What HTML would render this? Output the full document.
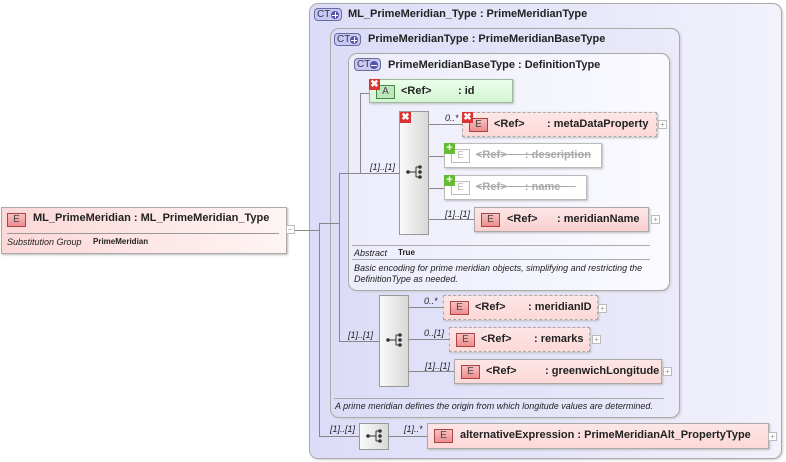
<!DOCTYPE html><html><head><meta charset="utf-8"><style>
*{margin:0;padding:0;box-sizing:border-box}
body{width:786px;height:462px;background:#fff;font-family:"Liberation Sans",sans-serif;position:relative;overflow:hidden;font-size:11px;color:#222}
.a{position:absolute}
.ct{position:absolute;border:1px solid #aaa;border-radius:9px;box-shadow:1px 1px 2px #ccc}
.badge{position:absolute;height:13px;border:1px solid #6a6aa0;border-radius:4px;background:#c8c8f0;font-size:10px;line-height:11px;padding-left:2px;color:#335}
.badge i{position:absolute;right:2px;top:2px;width:8px;height:8px;border-radius:50%;background:#55a;}
.badge i:before{content:"";position:absolute;left:1px;top:3.5px;width:6px;height:1px;background:#fff}
.badge i.pls:after{content:"";position:absolute;left:3.5px;top:1px;width:1px;height:6px;background:#fff}
.t{position:absolute;font-weight:bold;font-size:11px;white-space:nowrap}
.el{position:absolute;border:1px solid #aaa;background:linear-gradient(#fde6e6,#fdd8d8);box-shadow:1px 1px 2px #bbb}
.el.d{border:1px dashed #aaa}
.el.g{background:#fff;border:1px solid #bbb;color:#aaa}
.E{position:absolute;left:6px;top:5px;width:19px;height:14px;border:1px solid #a44;background:linear-gradient(#f9c0c0,#ee8e8e);font-size:10px;text-align:center;line-height:12px;color:#444}
.g .E{border-color:#bbb;background:#fff;color:#bbb}
.el span{position:absolute;top:5px;font-weight:bold;white-space:nowrap}
.seq{position:absolute;border:1px solid #999;background:linear-gradient(90deg,#fafafa,#d8d8d8);}
.pl{position:absolute;width:9px;height:9px;border:1px solid #bbb;background:#fff;font-size:8px;line-height:7px;text-align:center;color:#999}
.h{position:absolute;height:1px;background:#888}
.v{position:absolute;width:1px;background:#888}
.m{position:absolute;font-style:italic;font-size:9px;white-space:nowrap}
.x{position:absolute;width:11px;height:11px;background:#d33;color:#fff;font-size:10px;line-height:11px;text-align:center;font-weight:bold}
.p{position:absolute;width:11px;height:11px;background:#6b3;color:#fff;font-size:11px;line-height:10px;text-align:center;font-weight:bold}
svg.ic{position:absolute}
</style></head><body>
<svg width="0" height="0" style="position:absolute"><defs><g id="sq" fill="#333" stroke="#333"><circle cx="2" cy="7" r="1.8" stroke="none"/><line x1="2" y1="7" x2="10" y2="7"/><line x1="10" y1="2" x2="10" y2="12"/><line x1="10" y1="2" x2="14" y2="2"/><line x1="10" y1="12" x2="14" y2="12"/><circle cx="14" cy="2" r="1.8" stroke="none"/><circle cx="14" cy="7" r="1.8" stroke="none"/><circle cx="14" cy="12" r="1.8" stroke="none"/></g></defs></svg>
<div class="ct" style="left:309px;top:3px;width:473px;height:456px;background:linear-gradient(90deg,#dcdcf8,#e8e8fa 60%,#f2f2fc)"></div>
<div class="badge" style="left:314px;top:8px;width:28px">CT<i class="pls"></i></div>
<div class="t" style="left:348px;top:8px">ML_PrimeMeridian_Type : PrimeMeridianType</div>
<div class="ct" style="left:330px;top:28px;width:350px;height:390px;background:linear-gradient(90deg,#dcdcf8,#eaeafa)"></div>
<div class="badge" style="left:334px;top:33px;width:27px">CT<i class="pls"></i></div>
<div class="t" style="left:368px;top:33px">PrimeMeridianType : PrimeMeridianBaseType</div>
<div class="ct" style="left:348px;top:53px;width:322px;height:238px;background:linear-gradient(90deg,#ececfb,#fafaff)"></div>
<div class="badge" style="left:354px;top:58px;width:27px">CT<i></i></div>
<div class="t" style="left:388px;top:59px">PrimeMeridianBaseType : DefinitionType</div>
<div class="el" style="left:369px;top:79px;width:144px;height:24px;background:linear-gradient(#eaffea,#d4f4d4);border-color:#9b9"><div class="E" style="border-color:#484;background:#bde8bd;left:6px">A</div><span style="left:31px">&lt;Ref&gt;</span><span style="left:88px">: id</span></div>
<div class="x" style="left:369px;top:79px">✖</div>
<div class="seq" style="left:399px;top:111px;width:30px;height:124px"></div>
<div class="x" style="left:400px;top:112px">✖</div>
<svg class="ic" style="left:406px;top:165px" width="17" height="15"><use href="#sq"/></svg>
<div class="el d" style="left:462px;top:112px;width:195px;height:25px"><div class="E">E</div><span style="left:31px">&lt;Ref&gt;</span><span style="left:84px">: metaDataProperty</span></div>
<div class="x" style="left:462px;top:112px">✖</div><div class="pl" style="left:658px;top:120px">+</div>
<div class="el g" style="left:444px;top:143px;width:158px;height:25px"><div class="E">E</div><span style="left:31px;text-decoration:line-through">&lt;Ref&gt;&nbsp;&nbsp;&nbsp;&nbsp;&nbsp;&nbsp;: description</span></div>
<div class="p" style="left:444px;top:143px">+</div>
<div class="el g" style="left:444px;top:175px;width:143px;height:25px"><div class="E">E</div><span style="left:31px;text-decoration:line-through">&lt;Ref&gt;&nbsp;&nbsp;&nbsp;&nbsp;&nbsp;&nbsp;: name&nbsp;&nbsp;&nbsp;&nbsp;&nbsp;</span></div>
<div class="p" style="left:444px;top:175px">+</div>
<div class="el" style="left:474px;top:207px;width:175px;height:25px;background:linear-gradient(#fde6e6,#fad0d0)"><div class="E">E</div><span style="left:32px">&lt;Ref&gt;</span><span style="left:82px">: meridianName</span></div>
<div class="pl" style="left:651px;top:215px">+</div>
<div class="m" style="left:445px;top:113px">0..*</div>
<div class="m" style="left:370px;top:162px">[1]..[1]</div>
<div class="m" style="left:445px;top:209px">[1]..[1]</div>
<div class="h" style="left:429px;top:124px;width:33px"></div>
<div class="h" style="left:429px;top:156px;width:15px"></div>
<div class="h" style="left:429px;top:188px;width:15px"></div>
<div class="h" style="left:429px;top:219px;width:45px"></div>
<div class="h" style="left:352px;top:245px;width:298px;background:#aaa"></div>
<div class="m" style="left:354px;top:248px">Abstract</div><div class="a" style="left:398px;top:248px;font-size:8px;font-weight:bold">True</div>
<div class="h" style="left:352px;top:259px;width:298px;background:#aaa"></div>
<div class="m" style="left:354px;top:263px;line-height:11px">Basic encoding for prime meridian objects, simplifying and restricting the<br>DefinitionType as needed.</div>
<div class="seq" style="left:379px;top:295px;width:30px;height:92px"></div>
<svg class="ic" style="left:386px;top:333px" width="17" height="15"><use href="#sq"/></svg>
<div class="el d" style="left:443px;top:295px;width:155px;height:25px"><div class="E">E</div><span style="left:31px">&lt;Ref&gt;</span><span style="left:84px">: meridianID</span></div><div class="pl" style="left:598px;top:304px">+</div>
<div class="el d" style="left:449px;top:327px;width:141px;height:25px"><div class="E">E</div><span style="left:31px">&lt;Ref&gt;</span><span style="left:84px">: remarks</span></div><div class="pl" style="left:592px;top:335px">+</div>
<div class="el" style="left:454px;top:359px;width:208px;height:25px"><div class="E">E</div><span style="left:31px">&lt;Ref&gt;</span><span style="left:90px">: greenwichLongitude</span></div><div class="pl" style="left:663px;top:367px">+</div>
<div class="m" style="left:424px;top:296px">0..*</div>
<div class="m" style="left:424px;top:328px">0..[1]</div>
<div class="m" style="left:425px;top:361px">[1]..[1]</div>
<div class="m" style="left:348px;top:330px">[1]..[1]</div>
<div class="h" style="left:409px;top:307px;width:34px"></div>
<div class="h" style="left:409px;top:339px;width:40px"></div>
<div class="h" style="left:409px;top:371px;width:45px"></div>
<div class="h" style="left:334px;top:398px;width:330px;background:#aaa"></div>
<div class="m" style="left:335px;top:401px">A prime meridian defines the origin from which longitude values are determined.</div>
<div class="seq" style="left:359px;top:423px;width:30px;height:27px"></div>
<svg class="ic" style="left:366px;top:429px" width="17" height="15"><use href="#sq"/></svg>
<div class="el" style="left:427px;top:423px;width:342px;height:26px"><div class="E">E</div><span style="left:32px">alternativeExpression : PrimeMeridianAlt_PropertyType</span></div><div class="pl" style="left:768px;top:432px">+</div>
<div class="m" style="left:404px;top:424px">[1]..*</div>
<div class="m" style="left:330px;top:424px">[1]..[1]</div>
<div class="h" style="left:389px;top:436px;width:38px"></div>
<div class="h" style="left:319px;top:436px;width:40px"></div>
<div class="el" style="left:1px;top:207px;width:286px;height:47px;background:linear-gradient(90deg,#fcd8d8,#fef4f4)"><div class="E" style="left:5px;top:5px">E</div><span style="left:31px;top:4px">ML_PrimeMeridian : ML_PrimeMeridian_Type</span><div class="h" style="left:5px;top:25px;width:272px;background:#999"></div><div class="m" style="left:5px;top:29px;font-size:9px">Substitution Group</div><div class="a" style="left:91px;top:29px;font-size:8px;font-weight:bold">PrimeMeridian</div></div>
<div class="pl" style="left:286px;top:225px">−</div>
<div class="h" style="left:295px;top:230px;width:24px"></div>
<div class="v" style="left:319px;top:223px;height:214px"></div>
<div class="h" style="left:319px;top:223px;width:21px"></div>
<div class="v" style="left:339px;top:173px;height:169px"></div>
<div class="h" style="left:339px;top:341px;width:40px"></div>
<div class="h" style="left:339px;top:173px;width:60px"></div>
<div class="v" style="left:360px;top:93px;height:80px"></div>
<div class="h" style="left:360px;top:93px;width:9px"></div>
</body></html>
